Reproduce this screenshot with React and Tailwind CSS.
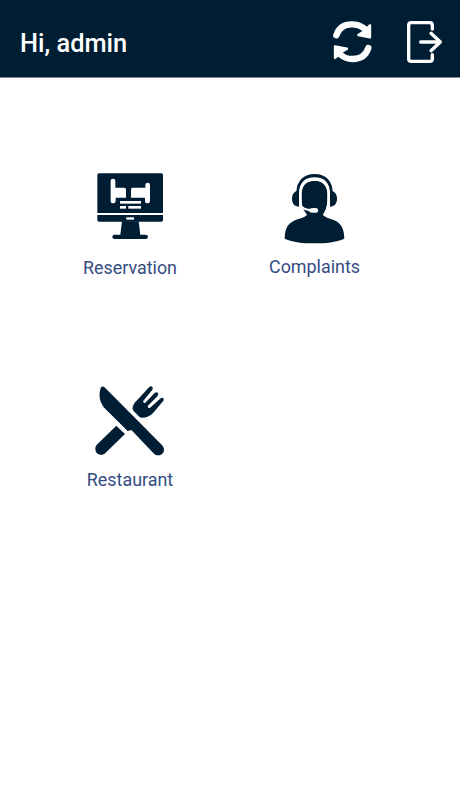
const NAVY = '#001e33';

function RefreshIcon() {
  return (
    <svg viewBox="0 0 180 180" className="size-[60px]" fill="none" stroke="#fff" strokeWidth="19" strokeLinecap="round">
      <path d="M34 76C42 50 61 43 81 43C96 43 105 46 116 54" />
      <path d="M135 46V82L100 75L115 65Z" fill="#fff" strokeWidth="7" strokeLinejoin="round" />
      <path d="M130 114C122 139 102 147 83 147C67 147 58 144 48 135" />
      <path d="M30 109L66 116L50 126L30 144Z" fill="#fff" strokeWidth="7" strokeLinejoin="round" />
    </svg>
  );
}

function LogoutIcon() {
  return (
    <svg viewBox="0 0 180 180" className="size-[60px]" fill="none" stroke="#fff" strokeWidth="10" strokeLinecap="round" strokeLinejoin="round">
      <path d="M112 57V46Q112 38 104 38H49Q41 38 41 46V146Q41 154 49 154H104Q112 154 112 146V134" />
      <path d="M77 96H136M108 70L136 96L108 122" />
    </svg>
  );
}

function ReservationIcon() {
  return (
    <svg viewBox="0 0 240 240" className="size-20" fill={NAVY}>
      <path d="M27 25H214Q219 25 219 30V144H22V30Q22 25 27 25Z" />
      <path d="M22 150H219V165Q219 170 214 170H27Q22 170 22 165Z" />
      <path d="M96 169H146L151 209H167Q174 209 174 216Q174 222 167 222H74Q67 222 67 216Q67 209 74 209H91Z" />
      <g fill="#fff">
        <path d="M62 47Q62 41 69 41Q76 41 76 47V68H102Q108 68 108 74V98H77V108Q77 115 70 115Q62 115 62 108Z" />
        <path d="M180 60Q180 53 173 53Q166 53 166 60V68H128Q123 68 123 74V98H165V108Q165 115 173 115Q180 115 180 108Z" />
        <rect x="90" y="108" width="63" height="8" />
        <rect x="90" y="123" width="18" height="8" />
        <rect x="115" y="123" width="38" height="8" />
        <rect x="109" y="157" width="23" height="7" />
      </g>
    </svg>
  );
}

function ComplaintsIcon() {
  return (
    <svg viewBox="0 0 240 255" className="h-[85px] w-20" fill={NAVY}>
      <path d="M79 92C79 62 94 47 119 47C144 47 158 63 158 92C158 122 151 139 143 149C151 158 163 160 178 166C200 176 207 192 208 221C183 232 152 235 118 235C84 235 54 232 29 221C30 191 37 177 60 166C74 160 88 158 96 150L86 134C80 122 79 108 79 92Z" />
      <path d="M69 82C70 49 89 32 119 32C149 32 167 49 168 82" fill="none" stroke={NAVY} strokeWidth="10" />
      <path d="M72 76V125C59 124 51 116 51 101C51 87 59 78 72 76Z" />
      <path d="M165 76V125C178 124 186 116 186 101C186 87 178 78 165 76Z" />
      <path d="M76 123V86C76 57 91 43 119 43C147 43 161 58 161 86V123" fill="none" stroke="#fff" strokeWidth="8" />
      <path d="M78 119C86 127 94 132 105 131C110 128 120 129 125 130C131 132 131 142 125 143H111C105 143 104 138 98 137C90 136 82 132 76 126Z" fill="#fff" />
    </svg>
  );
}

function RestaurantIcon() {
  return (
    <svg viewBox="0 0 240 240" className="size-20" fill={NAVY}>
      <path d="M33 22Q39 17 45 23L215 194C230 210 219 226 204 226C198 226 194 223 190 219L124 150L113 153L47 88C29 70 24 45 33 22Z" />
      <path d="M79 137L105 162L47 218C36 230 16 224 16 207C16 201 18 197 22 193Z" />
      <path d="M175 24Q181 16 187 21Q191 25 186 31L160 62Q158 66 162 68Q165 70 168 66L194 39Q200 35 204 39Q207 42 202 49L174 77Q172 80 175 83Q179 85 182 82L212 55Q218 51 221 56Q223 60 217 66L190 98C176 114 153 116 148 110L130 92C124 82 132 69 144 58Z" />
    </svg>
  );
}

function Tile({ icon, label, gap }) {
  return (
    <button type="button" className={`flex flex-col items-center text-[17.9px] leading-6 text-[#344c82] ${gap}`}>
      {icon}
      <span>{label}</span>
    </button>
  );
}

export default function App() {
  return (
    <div className="h-[800px] w-[460px] bg-white font-['Roboto',sans-serif]">
      <header className="flex h-[77px] items-start bg-[#001e33] pr-[5px] pl-5 pt-[10px]">
        <h1 className="mt-[17px] flex-1 text-[25.4px] leading-8 font-medium text-white">Hi, admin</h1>
        <button type="button" aria-label="Refresh"><RefreshIcon /></button>
        <button type="button" aria-label="Log out" className="ml-[10px]"><LogoutIcon /></button>
      </header>
      <main className="grid grid-cols-[184px_185px] grid-rows-[215px_120px] items-start border-t border-[#85858f] pt-[87px] pl-[38px]">
        <Tile icon={<ReservationIcon />} label="Reservation" gap="gap-[11px]" />
        <Tile icon={<ComplaintsIcon />} label="Complaints" gap="gap-[5px]" />
        <Tile icon={<RestaurantIcon />} label="Restaurant" gap="gap-[8px]" />
      </main>
    </div>
  );
}
